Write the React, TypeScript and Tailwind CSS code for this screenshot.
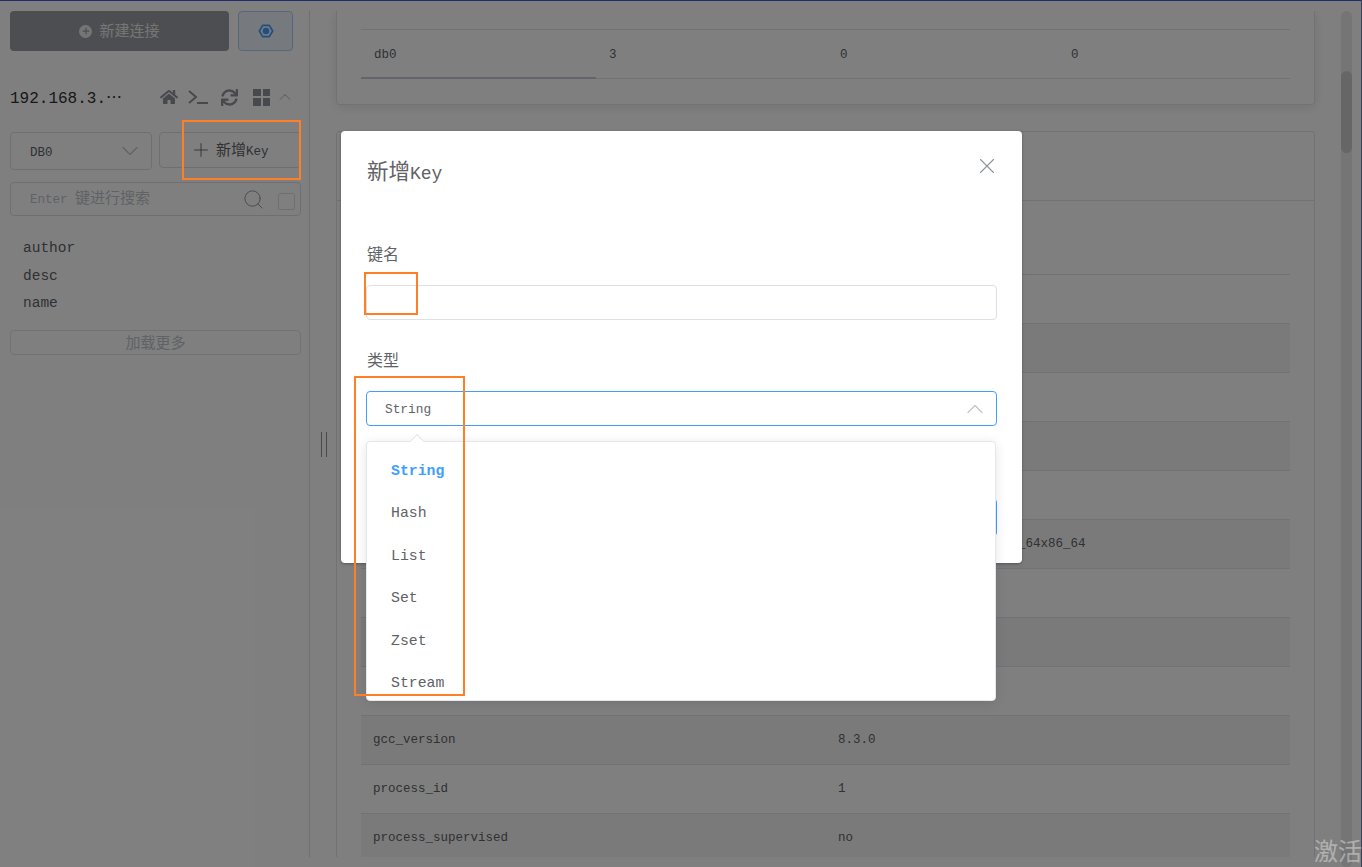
import { ChevronDown, ChevronUp, Plus, Search, X } from "lucide-react";
import { FaHome, FaSync } from "react-icons/fa";

const font = "font-['Liberation_Mono','Noto_Sans_CJK_SC',monospace]";

const rows = [
	["", ""],
	["", ""],
	["", ""],
	["", ""],
	["", ""],
	["", ""],
	["", "Linux 3.10.0-957.el7.x86_64x86_64"],
	["", ""],
	["", ""],
	["", ""],
	["gcc_version", "8.3.0"],
	["process_id", "1"],
	["process_supervised", "no"],
];

const keys = ["author", "desc", "name"];
const types = ["String", "Hash", "List", "Set", "Zset", "Stream"];

const Sidebar = () => (
	<aside className="w-[310px] shrink-0 border-r border-[#dcdfe6] pl-[10px] pr-[8px] h-[846px]">
		<div className="flex gap-[9px]">
			<button className="w-[219px] h-[40px] rounded bg-[#9a9ca2] text-white/80 text-[15px] flex items-center justify-center gap-[7px]">
				<span className="w-[13px] h-[13px] rounded-full bg-white/80 flex items-center justify-center">
					<Plus className="w-[10px] h-[10px] text-[#9a9ca2]" strokeWidth={3} />
				</span>
				<span className="pt-[5px]">新建连接</span>
			</button>
			<button className="w-[55px] h-[40px] rounded border border-[#a6d0f8] bg-[#ecf5ff] flex items-center justify-center">
				<svg viewBox="0 0 24 24" className="w-[16px] h-[16px]">
					<path d="M2 12L7 3.5H17L22 12L17 20.5H7Z" fill="none" stroke="#409eff" strokeWidth="2.5" strokeLinejoin="round" />
					<circle cx="12" cy="12" r="5" fill="#409eff" />
				</svg>
			</button>
		</div>
		<div className="flex items-center mt-[33px] h-[26px]">
			<span className="text-[16px] text-[#303133] w-[150px] pt-[3px]">192.168.3.⋯</span>
			<div className="flex items-center text-[#909399]">
				<FaHome className="w-[18px] h-[18px]" />
				<svg viewBox="0 0 20 16" className="ml-[10px] w-[20px] h-[16px]" fill="none" stroke="#909399" strokeWidth="2">
					<path d="M1 2l7 6-7 6" />
					<path d="M9 14h11" />
				</svg>
				<FaSync className="ml-[13px] w-[17px] h-[17px]" />
				<div className="ml-[15px] grid grid-cols-2 gap-[2px] w-[17px]">
					<i className="h-[7.5px] bg-[#909399]" />
					<i className="h-[7.5px] bg-[#909399]" />
					<i className="h-[7.5px] bg-[#909399]" />
					<i className="h-[7.5px] bg-[#909399]" />
				</div>
				<ChevronUp className="ml-[5px] w-[20px] h-[20px] text-[#c0c4cc]" strokeWidth={1.25} />
			</div>
		</div>
		<div className="flex gap-[7px] mt-[22px]">
			<div className="w-[142px] h-[38px] rounded border border-[#dcdfe6] flex items-center justify-between pl-[19px] pr-[7px] text-[12.5px] text-[#606266]">
				<span className="pt-[4px]">DB0</span>
				<ChevronDown className="w-[28px] h-[28px] text-[#c0c4cc]" strokeWidth={1} />
			</div>
			<button className="w-[142px] h-[36px] rounded border border-[#dcdfe6] flex items-center pl-[30px] gap-[4px] text-[12.5px] text-[#606266]">
				<Plus className="w-[22px] h-[22px]" strokeWidth={1} />
				<span className="pt-[5px]">
					<span className="text-[15px]">新增</span>Key
				</span>
			</button>
		</div>
		<div className="mt-[12px] h-[34px] rounded border border-[#dcdfe6] flex items-center pl-[19px] pr-[5px] text-[12.5px] text-[#c0c4cc]">
			<span className="flex-1 pt-[3px]">
				Enter <span className="text-[15px]">键进行搜索</span>
			</span>
			<Search className="w-[23px] h-[23px] text-[#909399]" strokeWidth={1} />
			<span className="ml-[13px] w-[17px] h-[17px] mt-[5px] rounded-[2px] border border-[#dcdfe6]" />
		</div>
		<ul className="mt-[19px] pl-[13px] text-[14.5px] text-[#606266]">
			{keys.map((k) => (
				<li key={k} className="h-[27.5px] leading-[27.5px]">
					{k}
				</li>
			))}
		</ul>
		<div className="mt-[12px] h-[25px] rounded border border-[#e2e4ea] flex items-center justify-center pt-[6px] text-[15px] text-[#c0c4cc]">
			加载更多
		</div>
	</aside>
);

const Main = () => (
	<main className="w-[1031px] shrink-0 pl-[26px] pr-[26px] flex flex-col gap-[26px] h-[846px] overflow-hidden">
		<section className="h-[94px] shrink-0 rounded-b border border-t-0 border-[#e2e4ea] shadow-[0_2px_12px_rgba(0,0,0,0.1)] px-[24px]">
			<div className="grid grid-cols-[235px_231px_231px_1fr] h-[50px] mt-[18px] border-y border-[#e2e4ea] items-stretch text-[12.5px] text-[#606266]">
				<span className="pl-[13px] pt-[3px] flex items-center border-b-2 border-[#c8c8d8] -mb-[1px]">db0</span>
				<span className="pl-[13px] pt-[2px] flex items-center">3</span>
				<span className="pl-[13px] pt-[2px] flex items-center">0</span>
				<span className="pl-[13px] pt-[2px] flex items-center">0</span>
			</div>
		</section>
		<section className="flex-1 rounded-t border border-b-0 border-[#e2e4ea]">
			<div className="h-[69px] border-b border-[#e2e4ea]" />
			<div className="px-[24px]">
				<div className="h-[25px]" />
				{rows.map(([k, v], i) => (
					<div
						key={i}
						className={`grid grid-cols-[465px_1fr] h-[49px] items-center border-b border-[#e2e4ea] text-[12.5px] text-[#606266] ${
							i > 0 && i % 2 === 0 ? "bg-[#f5f5f5]" : ""
						}`}>
						<span className="pl-[12px]">{k}</span>
						<span className="pl-[12px] whitespace-nowrap">{v}</span>
					</div>
				))}
			</div>
		</section>
	</main>
);

const Callout = ({ className }: { className: string }) => (
	<div className={`absolute border-2 border-[#ff7f27] ${className}`} />
);

export default function App() {
	return (
		<div className={`relative w-[1362px] h-[867px] overflow-hidden bg-white ${font}`}>
			<div className="flex pt-[11px] h-full">
				<Sidebar />
				<Main />
				<div className="relative w-[11px] h-[856px] rounded-full bg-[#ebebeb]">
					<div className="absolute top-[60px] w-[11px] h-[82px] rounded-full bg-[#cdcdcd]" />
				</div>
			</div>
			{/* drag handle between the panes */}
			<div className="absolute left-[321px] top-[432px] w-[6px] h-[25px] border-x border-[#909399]" />

			<div className="absolute inset-0 bg-black/50" />
			<div className="absolute top-0 inset-x-0 h-[1px] bg-[#1f2d6e]" />
			<div className="absolute top-0 bottom-0 right-0 w-[1px] bg-[#3a3f5c]" />

			{/* dialog */}
			<div className="absolute left-[341px] top-[131px] w-[681px] h-[432px] rounded bg-white shadow-[0_1px_3px_rgba(0,0,0,0.3)] px-[25px] pt-[27px]">
				<div className="flex items-center justify-between">
					<h2 className="ml-[1px] pt-[2px] text-[18px] leading-[26px] text-[#606266]">
						<span className="text-[21.5px]">新增</span>Key
					</h2>
					<X className="w-[26px] h-[26px] text-[#909399] -mt-[14px] -mr-[3px]" strokeWidth={1} />
				</div>
				<label className="block ml-[1px] mt-[57px] text-[16px] leading-[24px] text-[#606266]">键名</label>
				<div className="mt-[17px] h-[35px] w-[631px] rounded border border-[#dcdfe6]" />
				<label className="block ml-[1px] mt-[30px] text-[16px] leading-[24px] text-[#606266]">类型</label>
				<div className="mt-[17px] h-[35px] w-[631px] rounded border border-[#409eff] flex items-center justify-between pl-[18px] pr-[7px] text-[12.8px] text-[#606266]">
					<span className="pt-[2px]">String</span>
					<ChevronUp className="w-[28px] h-[28px] text-[#c0c4cc]" strokeWidth={1} />
				</div>
				<div className="absolute right-[25px] top-[368px] w-[80px] h-[37px] rounded bg-[#409eff]" />
			</div>

			{/* select dropdown */}
			<div className="absolute left-[366px] top-[441px] w-[630px] h-[260px] rounded border border-[#e4e7ed] bg-white shadow-[0_2px_12px_rgba(0,0,0,0.1)] pt-[8px] pl-[24px] text-[14.8px] text-[#606266] overflow-hidden">
				{types.map((t, i) => (
					<div key={t} className={`h-[42.4px] leading-[42.4px] ${i === 0 ? "font-bold text-[#409eff]" : ""}`}>
						{t}
					</div>
				))}
			</div>
			<div className="absolute left-[412px] top-[436px] w-[10px] h-[10px] rotate-45 bg-white border-l border-t border-[#e4e7ed]" />

			<Callout className="left-[182px] top-[120px] w-[119px] h-[60px]" />
			<Callout className="left-[364px] top-[272px] w-[54px] h-[43px]" />
			<Callout className="left-[354px] top-[376px] w-[111px] h-[320px]" />

			<div className="absolute left-[1314px] top-[834px] text-[24px] leading-[32px] text-white/40 font-['Noto_Sans_CJK_SC',sans-serif] whitespace-nowrap">
				激活
			</div>
		</div>
	);
}
